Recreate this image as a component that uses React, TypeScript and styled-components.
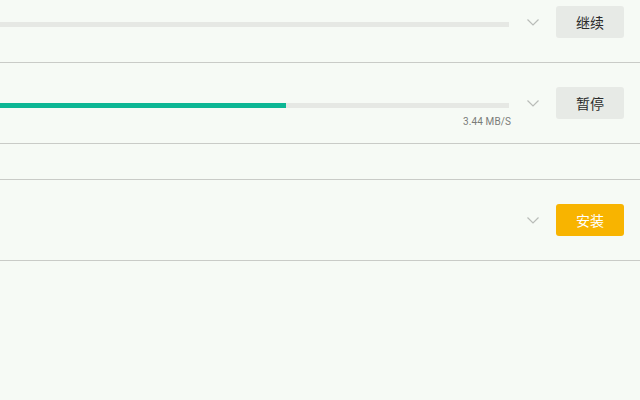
import React from "react";
import styled, { createGlobalStyle } from "styled-components";

const Global = createGlobalStyle`
  html, body { margin: 0; padding: 0; background: #f6faf5; }
  body { font-family: Roboto, "Noto Sans CJK SC", sans-serif; width: 640px; height: 400px; overflow: hidden; }
`;

const Viewport = styled.div`
  width: 640px;
  height: 400px;
  overflow: hidden;
  background: #f6faf5;
`;

const List = styled.div`
  display: flex;
  flex-direction: column;
  margin-top: -18px;
`;

const Row = styled.div`
  display: grid;
  grid-template-columns: 1fr 47px 68px;
  height: 80px;
  padding-right: 16px;
  border-bottom: 1px solid #c9cbc7;
`;

const Spacer = styled.div`
  height: 35px;
  border-bottom: 1px solid #c9cbc7;
`;

const Main = styled.div`
  display: flex;
  flex-direction: column;
  padding-top: 40px;
`;

const Track = styled.div`
  height: 5px;
  background: #e6e8e4;
`;

const Fill = styled.div`
  height: 100%;
  background: #0cb694;
`;

const Speed = styled.div`
  margin-top: 8px;
  margin-right: -2px;
  text-align: right;
  font-size: 10px;
  line-height: 12px;
  letter-spacing: 0.1px;
  color: #7a7c79;
`;

const ChevronBox = styled.div`
  display: flex;
  align-items: center;
  justify-content: center;
  padding-left: 1px;
`;

const Button = styled.button<{ $primary?: boolean }>`
  align-self: center;
  height: 32px;
  width: 68px;
  border: none;
  border-radius: 3px;
  font-family: "Noto Sans CJK SC", sans-serif;
  font-size: 14px;
  color: ${(p) => (p.$primary ? "#ffffff" : "#2b2b2b")};
  background: ${(p) => (p.$primary ? "#f8b400" : "#e7eae6")};
  padding: 0;
  cursor: pointer;
`;

const Chevron = () => (
  <svg width="12" height="7" viewBox="0 0 12 7" fill="none">
    <path d="M0.5 0.5 L6 6 L11.5 0.5" stroke="#b9bcb8" strokeWidth="1.2" />
  </svg>
);

type Item = {
  progress?: number;
  speed?: string;
  label: string;
  primary?: boolean;
};

const DownloadRow = ({ progress, speed, label, primary }: Item) => (
  <Row>
    <Main>
      {progress !== undefined && (
        <Track>
          <Fill style={{ width: `${progress}%` }} />
        </Track>
      )}
      {speed && <Speed>{speed}</Speed>}
    </Main>
    <ChevronBox>
      <Chevron />
    </ChevronBox>
    <Button $primary={primary}>{label}</Button>
  </Row>
);

export default function App() {
  return (
    <Viewport>
      <Global />
      <List>
        <DownloadRow progress={0} label="继续" />
        <DownloadRow progress={56.2} speed="3.44 MB/S" label="暂停" />
        <Spacer />
        <DownloadRow label="安装" primary />
      </List>
    </Viewport>
  );
}
